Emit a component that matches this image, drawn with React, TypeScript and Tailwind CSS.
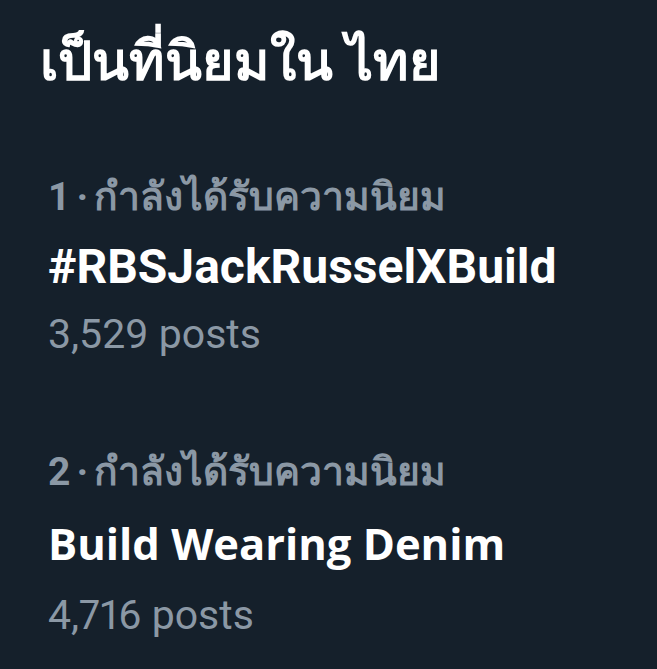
import React from "react";

const items = [
  {
    rank: 1,
    title: "#RBSJackRusselXBuild",
    posts: "3,529 posts",
    titleCls: "mt-[14px] text-[48px] font-['Roboto',sans-serif]",
    postsCls: "mt-[3px]",
  },
  {
    rank: 2,
    title: "Build Wearing Denim",
    posts: "4,716 posts",
    titleCls: "mt-[16px] text-[43.5px] font-['Open_Sans',sans-serif]",
    postsCls: "mt-[7px]",
  },
];

export default function App() {
  return (
    <div className="w-[657px] h-[669px] bg-[#15202b] overflow-hidden font-['Roboto','Noto_Sans',sans-serif]">
      <h1 className="pl-[40px] pt-[30px] text-[54px] leading-[64px] font-bold text-white">
        เป็นที่นิยมใน ไทย
      </h1>
      <div className="flex flex-col gap-[82px] pl-[48px] pt-[79px]">
        {items.map((it) => (
          <div key={it.rank} className="flex flex-col">
            <div className="text-[39px] leading-[48px] font-bold text-[#8b98a5] whitespace-nowrap">
              {it.rank}
              <span className="mx-[6px]">·</span>
              กำลังได้รับความนิยม
            </div>
            <div className={`leading-[64px] font-bold text-white whitespace-nowrap ${it.titleCls}`}>
              {it.title}
            </div>
            <div className={`text-[41px] leading-[64px] text-[#8b98a5] proportional-nums ${it.postsCls}`}>
              {it.posts}
            </div>
          </div>
        ))}
      </div>
    </div>
  );
}
